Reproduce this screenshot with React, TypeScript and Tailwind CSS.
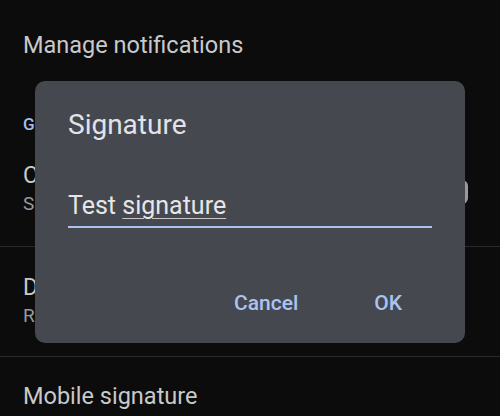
import React from 'react';

const font = { fontFamily: 'Roboto, "Noto Sans", sans-serif' };

const SettingRow: React.FC<{ title: string; subtitle: string; className?: string; children?: React.ReactNode }> = ({
    title,
    subtitle,
    className,
    children,
}) => (
    <div className={`flex items-start justify-between border-b border-[#2a2a2a] pl-[23px] pr-[32px] ${className ?? ''}`}>
        <div className="flex flex-col">
            <span className="text-[23px] leading-[28px] text-[#c9c9c9]">{title}</span>
            <span className="text-[19px] leading-[28px] text-[#9a9a9a]">{subtitle}</span>
        </div>
        {children}
    </div>
);

const App: React.FC = () => {
    return (
        <div className="relative w-[500px] h-[416px] overflow-hidden bg-[#0c0c0c]" style={font}>
            {/* settings list behind the dialog */}
            <div className="flex flex-col">
                <div className="h-[92px] flex items-center pl-[23px]">
                    <span className="text-[23.5px] text-[#c9c9c9]">Manage notifications</span>
                </div>
                <div className="h-[48px] pt-[20px] pl-[23px]">
                    <span className="block text-[17px] leading-[24px] font-medium text-[#a9bde6]">General</span>
                </div>
                <SettingRow title="Conversation view" subtitle="Show emails grouped by thread" className="pt-[22px] pb-[28px]">
                    <div className="mt-[18px] w-[44px] h-[24px] rounded-[6px] bg-[#9b9b9b]" />
                </SettingRow>
                <SettingRow title="Default reply action" subtitle="Reply" className="pt-[27px] pb-[26px]" />
                <div className="pt-[25px] pl-[23px]">
                    <span className="block text-[23.5px] leading-[28px] text-[#c9c9c9]">Mobile signature</span>
                </div>
            </div>

            {/* signature dialog */}
            <div className="absolute left-[35px] top-[81px] w-[430px] h-[262px] rounded-[10px] bg-[#46484f] px-[33px] flex flex-col">
                <h2 className="mt-[29px] text-[28px] leading-[30px] text-[#e2e3e8]">Signature</h2>
                <div className="mt-[51px] border-b-2 border-[#a9c2f1] pb-[5px]">
                    <span className="block text-[25px] leading-[30px] text-[#e6e6e8]">
                        Test <span className="underline decoration-[#c8c8c8] decoration-1 underline-offset-[4px]">signature</span>
                    </span>
                </div>
                <div className="mt-[63px] flex justify-end items-center">
                    <button className="text-[21px] font-medium text-[#aac3f2] leading-[24px]">Cancel</button>
                    <button className="ml-[76px] mr-[30px] text-[21px] font-medium text-[#aac3f2] leading-[24px]">OK</button>
                </div>
            </div>
        </div>
    );
};

export default App;
